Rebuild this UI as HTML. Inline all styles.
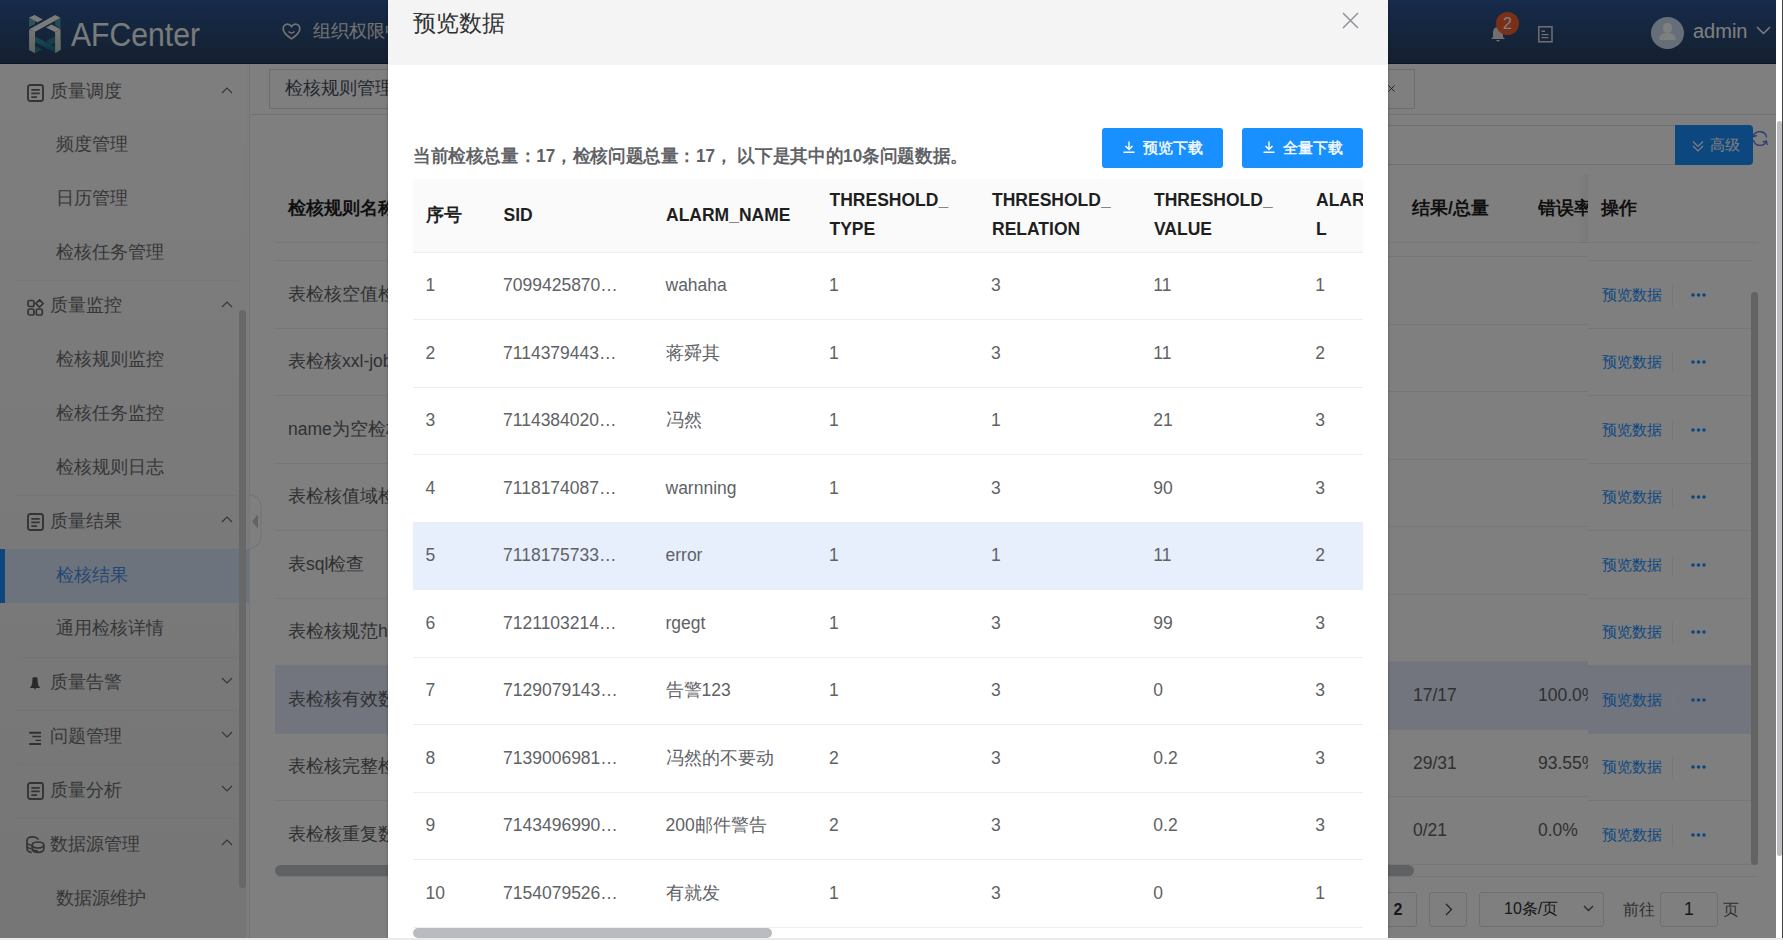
<!DOCTYPE html>
<html><head><meta charset="utf-8">
<style>
*{box-sizing:border-box;margin:0;padding:0}
html,body{width:1783px;height:940px;overflow:hidden;background:#fff;font-family:"Liberation Sans",sans-serif;}
.a{position:absolute;white-space:nowrap}
#page{position:absolute;left:0;top:0;width:1776px;height:938px;background:#fff;overflow:hidden}
#hdr{position:absolute;left:0;top:0;width:1776px;height:64px;background:linear-gradient(#2c5596,#2a4262 92%,#283e5c 98%,#102a58 98.5%)}
#side{position:absolute;left:0;top:64px;width:250px;height:874px;background:linear-gradient(#fdfdfd,#f6f6f6 35%,#ececec);border-right:1px solid #eaeaea}
.st{font-size:17.5px;line-height:20px;color:#6c6e72}
.div{position:absolute;left:17px;width:220px;height:1px;background:rgba(0,0,0,.035)}
.arr{position:absolute;left:221px;width:11px;height:6px}
#mask{position:absolute;left:0;top:0;width:1776px;height:938px;background:rgba(0,0,0,.5)}
#modal{position:absolute;left:388px;top:0;width:1000px;height:938px;background:#fff;overflow:hidden;box-shadow:0 1px 3px rgba(0,0,0,.3)}
#mhdr{position:absolute;left:0;top:0;width:1000px;height:65px;background:#f4f4f4}
.th{font-size:17.5px;font-weight:bold;color:#1f1f1f;line-height:29px}
.td{font-size:17.5px;color:#606266;line-height:20px}
.rowb{position:absolute;left:25px;width:950px;height:1px;background:#ebeef5}
.btn{position:absolute;top:128px;height:40px;width:121px;background:#1890ff;border-radius:3px;color:#fff;font-size:15px}
#vsb{position:absolute;left:1776px;top:0;width:7px;height:940px;background:#fff}
#bstrip{position:absolute;left:0;top:938px;width:1783px;height:2px;background:#ebebeb}
</style></head><body>
<div id="page">
  <div id="hdr">
    <svg class="a" style="left:25px;top:10px" width="40" height="48" viewBox="0 0 40 48">
      <defs><linearGradient id="pl" x1="0" y1="0" x2="0" y2="1"><stop offset="0" stop-color="#ecefe6"/><stop offset="1" stop-color="#b8cac8"/></linearGradient>
      <linearGradient id="tl" x1="0" y1="0" x2="1" y2="1"><stop offset="0" stop-color="#3e96a0"/><stop offset="1" stop-color="#0a6a8a"/></linearGradient></defs>
      <polygon points="4.1,7.4 10,10.3 10,14.3 4.1,17.1" fill="#5ea9aa"/>
      <polygon points="30.1,11 35.5,7.7 35.5,19 30.1,15" fill="#4a98a0"/>
      <polygon points="10,26.6 30.1,36.8 30.1,42.4 10,32.2" fill="url(#tl)"/>
      <polygon points="10,36 17.5,39.6 10,43" fill="#2a7a8a"/>
      <polygon points="21.5,31 30.1,26.2 30.1,32.5 25,35" fill="#2a7c8c"/>
      <polygon points="4.1,7.4 9.7,4.9 17.9,9.5 12.3,12.3" fill="#f2f8f6"/>
      <polygon points="4.3,19.2 30.1,4.9 35.5,7.7 9.7,22" fill="#f2f8f6"/>
      <polygon points="20.9,17.4 26.6,14.6 35.5,19.2 30.1,22" fill="#f2f8f6"/>
      <polygon points="4.1,19.4 10,22 10,43.2 4.1,40.1" fill="url(#pl)"/>
      <polygon points="30.1,22 35.5,19.2 35.8,39.8 30.1,43.2" fill="url(#pl)"/>
    </svg>
    <div class="a" style="left:71px;top:15px;font-size:33.5px;line-height:40px;color:#f0f8f5;transform:scaleX(0.9);transform-origin:0 0">AFCenter</div>
    <svg class="a" style="left:282px;top:23px" width="19" height="17" viewBox="0 0 19 17"><path d="M9.5 15.8 C6 13.5 1.2 10.5 1.2 5.8 C1.2 3 3.2 1.2 5.5 1.2 C7.3 1.2 8.6 2.3 9.5 3.6 C10.4 2.3 11.7 1.2 13.5 1.2 C15.8 1.2 17.8 3 17.8 5.8 C17.8 10.5 13 13.5 9.5 15.8Z" fill="none" stroke="#e6e6e6" stroke-width="1.7"/><path d="M6.5 8.5 Q9.5 11.5 12.5 8.5" fill="none" stroke="#e6e6e6" stroke-width="1.6"/></svg>
    <div class="a" style="left:313px;top:21px;font-size:17.5px;line-height:20px;color:#e6e6e6">组织权限中心</div>
    <!-- bell -->
    <svg class="a" style="left:1490px;top:26px" width="16" height="17" viewBox="0 0 16 17"><path d="M8 1 C4.5 1 3 3.5 3 7 L3 11 L1 13 L15 13 L13 11 L13 7 C13 3.5 11.5 1 8 1Z" fill="#e0e0e0"/><path d="M6 14 Q8 17 10 14Z" fill="#e0e0e0"/></svg>
    <div class="a" style="left:1496px;top:12px;width:23px;height:23px;border-radius:50%;background:#f4602e;color:#fff;font-size:16px;line-height:23px;text-align:center">2</div>
    <svg class="a" style="left:1537.5px;top:26px" width="15" height="17" viewBox="0 0 15 17"><rect x="0.8" y="0.8" width="13.2" height="15" fill="none" stroke="#e0e0e0" stroke-width="1.5"/><path d="M3.5 5.3 H7 M3.5 8.6 H10.5 M3.5 11.6 H10.5" stroke="#e0e0e0" stroke-width="1.4"/></svg>
    <div class="a" style="left:1651px;top:17px;width:33px;height:32px;border-radius:50%;background:#cddff3;overflow:hidden">
      <div class="a" style="left:11.5px;top:6.3px;width:9.5px;height:9.5px;border-radius:50%;background:#fff"></div>
      <div class="a" style="left:7.7px;top:16px;width:17.6px;height:7px;border-radius:8px 8px 0 0;background:#fff"></div>
    </div>
    <div class="a" style="left:1693px;top:19px;font-size:20px;line-height:24px;color:#fff">admin</div>
    <svg class="a" style="left:1756px;top:26px" width="15" height="9" viewBox="0 0 15 9"><path d="M1 1 L7.5 7.5 L14 1" fill="none" stroke="#fff" stroke-width="1.5"/></svg>
  </div>

  <div id="side">
<div class="div" style="top:0px;background:#fff"></div>
<svg class="a" style="left:27px;top:19.5px" width="18" height="19" viewBox="0 0 18 19"><rect x="1" y="1" width="15" height="16" rx="2.2" fill="none" stroke="#66686c" stroke-width="1.9"/><path d="M4.3 5.8 H12.8 M4.3 9.4 H12.8 M4.3 13.1 H10" stroke="#66686c" stroke-width="1.7"/></svg>
<div class="a st" style="left:50px;top:17px">质量调度</div>
<svg class="a" style="left:220.5px;top:22.7px" width="12" height="7" viewBox="0 0 12 7"><path d="M1 6 L6 1 L11 6" fill="none" stroke="#6a6a6a" stroke-width="1.1"/></svg>
<div class="a st" style="left:56px;top:70px">频度管理</div>
<div class="a st" style="left:56px;top:124px">日历管理</div>
<div class="a st" style="left:56px;top:178px">检核任务管理</div>
<div class="div" style="top:216.0px"></div>
<svg class="a" style="left:27px;top:234.5px" width="18" height="18" viewBox="0 0 18 18"><rect x="1" y="1.5" width="6" height="6" rx="1.8" fill="none" stroke="#66686c" stroke-width="1.7"/><rect x="1" y="10" width="6" height="6" rx="1.8" fill="none" stroke="#66686c" stroke-width="1.7"/><rect x="9.3" y="10" width="6" height="6" rx="1.8" fill="none" stroke="#66686c" stroke-width="1.7"/><path d="M12.5 0.8 L16.2 4.5 L12.5 8.2 L8.8 4.5 Z" fill="none" stroke="#66686c" stroke-width="1.7" stroke-linejoin="round"/></svg>
<div class="a st" style="left:50px;top:231px">质量监控</div>
<svg class="a" style="left:220.5px;top:236.7px" width="12" height="7" viewBox="0 0 12 7"><path d="M1 6 L6 1 L11 6" fill="none" stroke="#6a6a6a" stroke-width="1.1"/></svg>
<div class="a st" style="left:56px;top:285px">检核规则监控</div>
<div class="a st" style="left:56px;top:339px">检核任务监控</div>
<div class="a st" style="left:56px;top:393px">检核规则日志</div>
<div class="div" style="top:431.0px"></div>
<svg class="a" style="left:27px;top:449.0px" width="18" height="19" viewBox="0 0 18 19"><rect x="1" y="1" width="15" height="16" rx="2.2" fill="none" stroke="#66686c" stroke-width="1.9"/><path d="M4.3 5.8 H12.8 M4.3 9.4 H12.8 M4.3 13.1 H10" stroke="#66686c" stroke-width="1.7"/></svg>
<div class="a st" style="left:50px;top:446.5px">质量结果</div>
<svg class="a" style="left:220.5px;top:452.2px" width="12" height="7" viewBox="0 0 12 7"><path d="M1 6 L6 1 L11 6" fill="none" stroke="#6a6a6a" stroke-width="1.1"/></svg>
<div class="a" style="left:0;top:485px;width:249px;height:54px;background:#d8e6f9"></div>
<div class="a" style="left:0;top:485px;width:5px;height:54px;background:#1a8cff"></div>
<div class="a st" style="left:56px;top:500.5px;color:#4c8ee8">检核结果</div>
<div class="a st" style="left:56px;top:554px">通用检核详情</div>
<div class="div" style="top:592.5px"></div>
<svg class="a" style="left:29px;top:613.0px" width="12" height="13" viewBox="0 0 12 13"><path d="M3.5 1.2 Q3.5 0.2 4.5 0.2 H7.5 Q8.5 0.2 8.5 1.2 L8.8 6 Q9 8.5 11.3 11 H0.7 Q3 8.5 3.2 6 Z" fill="#505255"/><path d="M5 11 H7 L6 12.8 Z" fill="#505255"/></svg>
<div class="a st" style="left:50px;top:607.5px">质量告警</div>
<svg class="a" style="left:220.5px;top:613.2px" width="12" height="7" viewBox="0 0 12 7"><path d="M1 1 L6 6 L11 1" fill="none" stroke="#6a6a6a" stroke-width="1.1"/></svg>
<div class="div" style="top:646.0px"></div>
<svg class="a" style="left:29px;top:667.0px" width="13" height="14" viewBox="0 0 13 14"><path d="M0.2 1.8 H12 M11.5 1.8 H12" stroke="#606266" stroke-width="2"/><path d="M3.3 5.5 H12 M6.5 9.4 H12" stroke="#606266" stroke-width="1.4"/><path d="M0.2 13 H12" stroke="#606266" stroke-width="2"/></svg>
<div class="a st" style="left:50px;top:661.5px">问题管理</div>
<svg class="a" style="left:220.5px;top:667.2px" width="12" height="7" viewBox="0 0 12 7"><path d="M1 1 L6 6 L11 1" fill="none" stroke="#6a6a6a" stroke-width="1.1"/></svg>
<div class="div" style="top:699.5px"></div>
<svg class="a" style="left:27px;top:718.0px" width="18" height="19" viewBox="0 0 18 19"><rect x="1" y="1" width="15" height="16" rx="2.2" fill="none" stroke="#66686c" stroke-width="1.9"/><path d="M4.3 5.8 H12.8 M4.3 9.4 H12.8 M4.3 13.1 H10" stroke="#66686c" stroke-width="1.7"/></svg>
<div class="a st" style="left:50px;top:715.5px">质量分析</div>
<svg class="a" style="left:220.5px;top:721.2px" width="12" height="7" viewBox="0 0 12 7"><path d="M1 1 L6 6 L11 1" fill="none" stroke="#6a6a6a" stroke-width="1.1"/></svg>
<div class="div" style="top:753.5px"></div>
<svg class="a" style="left:26px;top:772.0px" width="19" height="18" viewBox="0 0 19 18"><path d="M12.5 3.5 Q10.5 0.8 6.5 0.8 Q1 0.8 1 5 V12.5 Q1 15.8 5.8 16.5" fill="none" stroke="#66686c" stroke-width="1.7"/><path d="M1 7.5 Q2.5 9 5.5 9.3 M1 11 Q2.5 12.5 5.5 12.8" fill="none" stroke="#66686c" stroke-width="1.5"/><ellipse cx="12" cy="9" rx="5.8" ry="3" fill="none" stroke="#66686c" stroke-width="1.7"/><path d="M6.2 9 V13 Q6.2 16.3 12 16.3 Q17.8 16.3 17.8 13 V9 M6.2 12.2 Q7 15 12 15" fill="none" stroke="#66686c" stroke-width="1.7"/></svg>
<div class="a st" style="left:50px;top:769.5px">数据源管理</div>
<svg class="a" style="left:220.5px;top:775.2px" width="12" height="7" viewBox="0 0 12 7"><path d="M1 6 L6 1 L11 6" fill="none" stroke="#6a6a6a" stroke-width="1.1"/></svg>
<div class="a st" style="left:56px;top:823.5px">数据源维护</div>
<div class="a" style="left:245.5px;top:0px;width:3.5px;height:874px;background:#f8f8f8"></div>
<div class="a" style="left:245.5px;top:485px;width:3.5px;height:54px;background:#d8e6f9"></div>
<div class="a" style="left:239px;top:246px;width:6.5px;height:578px;background:#d0d0d0;border-radius:4px"></div>
  </div>

  <div id="content">
<div class="a" style="left:269px;top:69px;width:1146px;height:40px;border:1px solid #d8dce5;background:#fff"></div>
<div class="a st" style="left:285px;top:78px;color:#495060">检核规则管理</div>
<svg class="a" style="left:1388px;top:84.5px" width="7" height="7" viewBox="0 0 7 7"><path d="M0.5 0.5 L6.5 6.5 M6.5 0.5 L0.5 6.5" stroke="#303540" stroke-width="0.9"/></svg>
<div class="a" style="left:250px;top:114px;width:1526px;height:1px;background:#e6e6e6"></div>
<svg class="a" style="left:249px;top:494px" width="13" height="55" viewBox="0 0 13 55"><path d="M0 0 Q12 3 12 12 V43 Q12 52 0 55 Z" fill="#fff" stroke="#e4e4e4" stroke-width="1"/><path d="M9 20 L3 27.5 L9 35 Z" fill="#c8c8c8"/></svg>
<div class="a" style="left:400px;top:125px;width:1280px;height:40px;border:1px solid #dcdfe6;border-radius:3px;background:#fff"></div>
<svg class="a" style="left:1750px;top:129px" width="20" height="20" viewBox="0 0 20 20"><path d="M3.6 7.3 A6.7 6.7 0 0 1 16.6 8.5" fill="none" stroke="#5078e8" stroke-width="1.3"/><path d="M16.3 12 A6.7 6.7 0 0 1 3.4 10.8" fill="none" stroke="#5078e8" stroke-width="1.3"/><path d="M2.5 3.5 L3.3 7.6 L7 6.6" fill="none" stroke="#5078e8" stroke-width="1.3"/><path d="M17.2 16 L16.5 12 L12.8 13" fill="none" stroke="#5078e8" stroke-width="1.3"/></svg>
<div class="a" style="left:1675px;top:125px;width:78px;height:40px;background:#1890ff;border-radius:0 4px 4px 0"></div>
<svg class="a" style="left:1691.5px;top:139.5px" width="12" height="12" viewBox="0 0 12 12"><path d="M1 1.5 L6 6.5 L11 1.5 M1 6 L6 11 L11 6" fill="none" stroke="#fff" stroke-width="1.2"/></svg>
<div class="a" style="left:1710px;top:136px;font-size:15px;line-height:18px;color:#fff">高级</div>
<div class="a" style="left:275px;top:175px;width:1483px;height:68px;background:#fff"></div>
<div class="a" style="left:275px;top:242px;width:1476px;height:1px;background:#ebeef5"></div>
<div class="a th" style="left:288px;top:194px">检核规则名称</div>
<div class="a th" style="left:1412px;top:194px">结果/总量</div>
<div class="a th" style="left:1538px;top:194px;width:50px;overflow:hidden">错误率</div>
<div class="a" style="left:275px;top:256px;width:1313px;height:1px;background:#ebeef5"></div>
<div class="a" style="left:275px;top:323.5px;width:1313px;height:1px;background:#ebeef5"></div>
<div class="a" style="left:275px;top:391.0px;width:1313px;height:1px;background:#ebeef5"></div>
<div class="a" style="left:275px;top:458.5px;width:1313px;height:1px;background:#ebeef5"></div>
<div class="a" style="left:275px;top:526.0px;width:1313px;height:1px;background:#ebeef5"></div>
<div class="a" style="left:275px;top:593.5px;width:1313px;height:1px;background:#ebeef5"></div>
<div class="a" style="left:275px;top:661.0px;width:1313px;height:1px;background:#ebeef5"></div>
<div class="a" style="left:275px;top:661.5px;width:1313px;height:67.5px;background:#e4ebfb"></div>
<div class="a" style="left:275px;top:728.5px;width:1313px;height:1px;background:#ebeef5"></div>
<div class="a" style="left:275px;top:796.0px;width:1313px;height:1px;background:#ebeef5"></div>
<div class="a" style="left:275px;top:863.5px;width:1313px;height:1px;background:#ebeef5"></div>
<div class="a td" style="left:1413px;top:685.25px">17/17</div>
<div class="a td" style="left:1538px;top:685.25px;width:50px;overflow:hidden">100.0%</div>
<div class="a td" style="left:1413px;top:752.75px">29/31</div>
<div class="a td" style="left:1538px;top:752.75px;width:50px;overflow:hidden">93.55%</div>
<div class="a td" style="left:1413px;top:820.25px">0/21</div>
<div class="a td" style="left:1538px;top:820.25px;width:50px;overflow:hidden">0.0%</div>
<div class="a" style="left:275px;top:243px;width:113px;height:18px;background:#fff;border-bottom:1px solid #ebeef5"></div>
<div class="a" style="left:275px;top:261.0px;width:113px;height:67.5px;background:#fff;border-bottom:1px solid #ebeef5"></div>
<div class="a td" style="left:288px;top:283.75px">表检核空值检查</div>
<div class="a" style="left:275px;top:328.5px;width:113px;height:67.5px;background:#fff;border-bottom:1px solid #ebeef5"></div>
<div class="a td" style="left:288px;top:351.25px">表检核xxl-job</div>
<div class="a" style="left:275px;top:396.0px;width:113px;height:67.5px;background:#fff;border-bottom:1px solid #ebeef5"></div>
<div class="a td" style="left:288px;top:418.75px">name为空检核</div>
<div class="a" style="left:275px;top:463.5px;width:113px;height:67.5px;background:#fff;border-bottom:1px solid #ebeef5"></div>
<div class="a td" style="left:288px;top:486.25px">表检核值域检查</div>
<div class="a" style="left:275px;top:531.0px;width:113px;height:67.5px;background:#fff;border-bottom:1px solid #ebeef5"></div>
<div class="a td" style="left:288px;top:553.75px">表sql检查</div>
<div class="a" style="left:275px;top:598.5px;width:113px;height:67.5px;background:#fff;border-bottom:1px solid #ebeef5"></div>
<div class="a td" style="left:288px;top:621.25px">表检核规范hive</div>
<div class="a" style="left:275px;top:666.0px;width:113px;height:67.5px;background:#e4ebfb;border-bottom:1px solid #ebeef5"></div>
<div class="a td" style="left:288px;top:688.75px">表检核有效数据</div>
<div class="a" style="left:275px;top:733.5px;width:113px;height:67.5px;background:#fff;border-bottom:1px solid #ebeef5"></div>
<div class="a td" style="left:288px;top:756.25px">表检核完整检查</div>
<div class="a" style="left:275px;top:801.0px;width:113px;height:67.5px;background:#fff;border-bottom:1px solid #ebeef5"></div>
<div class="a td" style="left:288px;top:823.75px">表检核重复数据</div>
<div class="a" style="left:1576px;top:175px;width:12px;height:68px;background:linear-gradient(90deg,rgba(0,0,0,0),rgba(0,0,0,.05))"></div>
<div class="a" style="left:1588px;top:175px;width:163px;height:68px;background:#fff;border-bottom:1px solid #ebeef5"></div>
<div class="a th" style="left:1601px;top:194px">操作</div>
<div class="a" style="left:1588px;top:243px;width:163px;height:18px;background:#fff;border-bottom:1px solid #ebeef5"></div>
<div class="a" style="left:1588px;top:261.0px;width:163px;height:67.5px;background:#fff;border-bottom:1px solid #ebeef5"></div>
<div class="a" style="left:1602px;top:285.75px;font-size:15px;line-height:18px;color:#1890ff">预览数据</div>
<div class="a" style="left:1672px;top:284.75px;width:1px;height:21px;background:#ebeef5"></div>
<svg class="a" style="left:1691px;top:292.75px" width="15" height="4" viewBox="0 0 15 4"><circle cx="2" cy="2" r="1.8" fill="#1890ff"/><circle cx="7.5" cy="2" r="1.8" fill="#1890ff"/><circle cx="13" cy="2" r="1.8" fill="#1890ff"/></svg>
<div class="a" style="left:1588px;top:328.5px;width:163px;height:67.5px;background:#fff;border-bottom:1px solid #ebeef5"></div>
<div class="a" style="left:1602px;top:353.25px;font-size:15px;line-height:18px;color:#1890ff">预览数据</div>
<div class="a" style="left:1672px;top:352.25px;width:1px;height:21px;background:#ebeef5"></div>
<svg class="a" style="left:1691px;top:360.25px" width="15" height="4" viewBox="0 0 15 4"><circle cx="2" cy="2" r="1.8" fill="#1890ff"/><circle cx="7.5" cy="2" r="1.8" fill="#1890ff"/><circle cx="13" cy="2" r="1.8" fill="#1890ff"/></svg>
<div class="a" style="left:1588px;top:396.0px;width:163px;height:67.5px;background:#fff;border-bottom:1px solid #ebeef5"></div>
<div class="a" style="left:1602px;top:420.75px;font-size:15px;line-height:18px;color:#1890ff">预览数据</div>
<div class="a" style="left:1672px;top:419.75px;width:1px;height:21px;background:#ebeef5"></div>
<svg class="a" style="left:1691px;top:427.75px" width="15" height="4" viewBox="0 0 15 4"><circle cx="2" cy="2" r="1.8" fill="#1890ff"/><circle cx="7.5" cy="2" r="1.8" fill="#1890ff"/><circle cx="13" cy="2" r="1.8" fill="#1890ff"/></svg>
<div class="a" style="left:1588px;top:463.5px;width:163px;height:67.5px;background:#fff;border-bottom:1px solid #ebeef5"></div>
<div class="a" style="left:1602px;top:488.25px;font-size:15px;line-height:18px;color:#1890ff">预览数据</div>
<div class="a" style="left:1672px;top:487.25px;width:1px;height:21px;background:#ebeef5"></div>
<svg class="a" style="left:1691px;top:495.25px" width="15" height="4" viewBox="0 0 15 4"><circle cx="2" cy="2" r="1.8" fill="#1890ff"/><circle cx="7.5" cy="2" r="1.8" fill="#1890ff"/><circle cx="13" cy="2" r="1.8" fill="#1890ff"/></svg>
<div class="a" style="left:1588px;top:531.0px;width:163px;height:67.5px;background:#fff;border-bottom:1px solid #ebeef5"></div>
<div class="a" style="left:1602px;top:555.75px;font-size:15px;line-height:18px;color:#1890ff">预览数据</div>
<div class="a" style="left:1672px;top:554.75px;width:1px;height:21px;background:#ebeef5"></div>
<svg class="a" style="left:1691px;top:562.75px" width="15" height="4" viewBox="0 0 15 4"><circle cx="2" cy="2" r="1.8" fill="#1890ff"/><circle cx="7.5" cy="2" r="1.8" fill="#1890ff"/><circle cx="13" cy="2" r="1.8" fill="#1890ff"/></svg>
<div class="a" style="left:1588px;top:598.5px;width:163px;height:67.5px;background:#fff;border-bottom:1px solid #ebeef5"></div>
<div class="a" style="left:1602px;top:623.25px;font-size:15px;line-height:18px;color:#1890ff">预览数据</div>
<div class="a" style="left:1672px;top:622.25px;width:1px;height:21px;background:#ebeef5"></div>
<svg class="a" style="left:1691px;top:630.25px" width="15" height="4" viewBox="0 0 15 4"><circle cx="2" cy="2" r="1.8" fill="#1890ff"/><circle cx="7.5" cy="2" r="1.8" fill="#1890ff"/><circle cx="13" cy="2" r="1.8" fill="#1890ff"/></svg>
<div class="a" style="left:1588px;top:666.0px;width:163px;height:67.5px;background:#e4ebfb;border-bottom:1px solid #ebeef5"></div>
<div class="a" style="left:1602px;top:690.75px;font-size:15px;line-height:18px;color:#1890ff">预览数据</div>
<div class="a" style="left:1672px;top:689.75px;width:1px;height:21px;background:#ebeef5"></div>
<svg class="a" style="left:1691px;top:697.75px" width="15" height="4" viewBox="0 0 15 4"><circle cx="2" cy="2" r="1.8" fill="#1890ff"/><circle cx="7.5" cy="2" r="1.8" fill="#1890ff"/><circle cx="13" cy="2" r="1.8" fill="#1890ff"/></svg>
<div class="a" style="left:1588px;top:733.5px;width:163px;height:67.5px;background:#fff;border-bottom:1px solid #ebeef5"></div>
<div class="a" style="left:1602px;top:758.25px;font-size:15px;line-height:18px;color:#1890ff">预览数据</div>
<div class="a" style="left:1672px;top:757.25px;width:1px;height:21px;background:#ebeef5"></div>
<svg class="a" style="left:1691px;top:765.25px" width="15" height="4" viewBox="0 0 15 4"><circle cx="2" cy="2" r="1.8" fill="#1890ff"/><circle cx="7.5" cy="2" r="1.8" fill="#1890ff"/><circle cx="13" cy="2" r="1.8" fill="#1890ff"/></svg>
<div class="a" style="left:1588px;top:801.0px;width:163px;height:64.0px;background:#fff;border-bottom:1px solid #ebeef5"></div>
<div class="a" style="left:1602px;top:825.75px;font-size:15px;line-height:18px;color:#1890ff">预览数据</div>
<div class="a" style="left:1672px;top:824.75px;width:1px;height:21px;background:#ebeef5"></div>
<svg class="a" style="left:1691px;top:832.75px" width="15" height="4" viewBox="0 0 15 4"><circle cx="2" cy="2" r="1.8" fill="#1890ff"/><circle cx="7.5" cy="2" r="1.8" fill="#1890ff"/><circle cx="13" cy="2" r="1.8" fill="#1890ff"/></svg>
<div class="a" style="left:1751px;top:242px;width:7px;height:1px;background:#ebeef5"></div>
<div class="a" style="left:1751px;top:292px;width:7px;height:573px;background:#c6c6c8;border-radius:4px"></div>
<div class="a" style="left:275px;top:865px;width:1139px;height:11px;background:#c0c2c6;border-radius:6px"></div>
<div class="a" style="left:275px;top:876px;width:1483px;height:1px;background:#ebeef5"></div>
<div class="a" style="left:1380px;top:892px;width:37px;height:35px;border:1px solid #dcdfe6;border-radius:3px;background:#fff"></div>
<div class="a" style="left:1393.5px;top:900px;font-size:16px;line-height:20px;font-weight:bold;color:#303133">2</div>
<div class="a" style="left:1429px;top:892px;width:38px;height:35px;border:1px solid #dcdfe6;border-radius:3px;background:#fff"></div>
<svg class="a" style="left:1444.5px;top:903px" width="8" height="13" viewBox="0 0 8 13"><path d="M1 1 L6.5 6.5 L1 12" fill="none" stroke="#404246" stroke-width="1.2"/></svg>
<div class="a" style="left:1479px;top:892px;width:125px;height:35px;border:1px solid #dcdfe6;border-radius:3px;background:#fff"></div>
<div class="a" style="left:1504px;top:899px;font-size:16px;line-height:20px;color:#303133">10条/页</div>
<svg class="a" style="left:1583px;top:905px" width="11" height="7" viewBox="0 0 11 7"><path d="M1 1 L5.5 5.5 L10 1" fill="none" stroke="#505050" stroke-width="1.3"/></svg>
<div class="a" style="left:1623px;top:900px;font-size:16px;line-height:20px;color:#606266">前往</div>
<div class="a" style="left:1660px;top:892px;width:58px;height:35px;border:1px solid #dcdfe6;border-radius:3px;background:#fff"></div>
<div class="a" style="left:1684px;top:899px;font-size:17.5px;line-height:20px;color:#303133">1</div>
<div class="a" style="left:1723px;top:900px;font-size:16px;line-height:20px;color:#606266">页</div>
  </div>
</div>
<div id="mask"></div>
<div id="modal">
  <div id="mhdr">
    <div class="a" style="left:25px;top:11px;font-size:22.5px;line-height:26px;color:#303133">预览数据</div>
    <svg class="a" style="left:954px;top:12px" width="17" height="17" viewBox="0 0 17 17"><path d="M1 1 L16 16 M16 1 L1 16" stroke="#909399" stroke-width="1.5"/></svg>
  </div>
  <div id="mbody">
<div class="a" style="left:25px;top:146px;font-size:17.5px;line-height:20px;font-weight:bold;color:#606266;transform:scaleX(0.978);transform-origin:0 0">当前检核总量：17，检核问题总量：17， 以下是其中的10条问题数据。</div>
<div class="btn" style="left:714px"></div>
<svg class="a" style="left:735px;top:141px" width="12" height="12" viewBox="0 0 12 12"><path d="M6 0.5 V8.5 M2.5 5 L6 8.5 L9.5 5 M0.5 11.2 H11.5" fill="none" stroke="#fff" stroke-width="1.4"/></svg>
<div class="a" style="left:755px;top:139px;font-size:15px;line-height:18px;color:#fff;-webkit-text-stroke:0.35px #fff">预览下载</div>
<div class="btn" style="left:854px"></div>
<svg class="a" style="left:875px;top:141px" width="12" height="12" viewBox="0 0 12 12"><path d="M6 0.5 V8.5 M2.5 5 L6 8.5 L9.5 5 M0.5 11.2 H11.5" fill="none" stroke="#fff" stroke-width="1.4"/></svg>
<div class="a" style="left:895px;top:139px;font-size:15px;line-height:18px;color:#fff;-webkit-text-stroke:0.35px #fff">全量下载</div>
<div class="a" style="left:25px;top:179px;width:950px;height:73.5px;background:#fafafa;border-bottom:1px solid #ebeef5"></div>
<div class="a th" style="left:38px;top:201px">序号</div>
<div class="a th" style="left:115.5px;top:201px">SID</div>
<div class="a th" style="left:278px;top:201px">ALARM_NAME</div>
<div class="a th" style="left:441.5px;top:186px">THRESHOLD_<br>TYPE</div>
<div class="a th" style="left:604px;top:186px">THRESHOLD_<br>RELATION</div>
<div class="a th" style="left:766px;top:186px">THRESHOLD_<br>VALUE</div>
<div class="a th" style="left:928px;top:186px;width:47px;overflow:hidden">ALARM_<br>L</div>
<div class="rowb" style="top:319.2px"></div>
<div class="a td" style="left:37.5px;top:275.25px">1</div>
<div class="a td" style="left:115px;top:275.25px">7099425870…</div>
<div class="a td" style="left:277.5px;top:275.25px">wahaha</div>
<div class="a td" style="left:441px;top:275.25px">1</div>
<div class="a td" style="left:603px;top:275.25px">3</div>
<div class="a td" style="left:765.3px;top:275.25px">11</div>
<div class="a td" style="left:927.3px;top:275.25px">1</div>
<div class="rowb" style="top:386.7px"></div>
<div class="a td" style="left:37.5px;top:342.75px">2</div>
<div class="a td" style="left:115px;top:342.75px">7114379443…</div>
<div class="a td" style="left:277.5px;top:342.75px">蒋舜其</div>
<div class="a td" style="left:441px;top:342.75px">1</div>
<div class="a td" style="left:603px;top:342.75px">3</div>
<div class="a td" style="left:765.3px;top:342.75px">11</div>
<div class="a td" style="left:927.3px;top:342.75px">2</div>
<div class="rowb" style="top:454.2px"></div>
<div class="a td" style="left:37.5px;top:410.25px">3</div>
<div class="a td" style="left:115px;top:410.25px">7114384020…</div>
<div class="a td" style="left:277.5px;top:410.25px">冯然</div>
<div class="a td" style="left:441px;top:410.25px">1</div>
<div class="a td" style="left:603px;top:410.25px">1</div>
<div class="a td" style="left:765.3px;top:410.25px">21</div>
<div class="a td" style="left:927.3px;top:410.25px">3</div>
<div class="rowb" style="top:521.7px"></div>
<div class="a td" style="left:37.5px;top:477.75px">4</div>
<div class="a td" style="left:115px;top:477.75px">7118174087…</div>
<div class="a td" style="left:277.5px;top:477.75px">warnning</div>
<div class="a td" style="left:441px;top:477.75px">1</div>
<div class="a td" style="left:603px;top:477.75px">3</div>
<div class="a td" style="left:765.3px;top:477.75px">90</div>
<div class="a td" style="left:927.3px;top:477.75px">3</div>
<div class="rowb" style="top:589.2px"></div>
<div class="a" style="left:25px;top:522px;width:950px;height:67px;background:#e7eefc"></div>
<div class="a td" style="left:37.5px;top:545.25px">5</div>
<div class="a td" style="left:115px;top:545.25px">7118175733…</div>
<div class="a td" style="left:277.5px;top:545.25px">error</div>
<div class="a td" style="left:441px;top:545.25px">1</div>
<div class="a td" style="left:603px;top:545.25px">1</div>
<div class="a td" style="left:765.3px;top:545.25px">11</div>
<div class="a td" style="left:927.3px;top:545.25px">2</div>
<div class="rowb" style="top:656.7px"></div>
<div class="a td" style="left:37.5px;top:612.75px">6</div>
<div class="a td" style="left:115px;top:612.75px">7121103214…</div>
<div class="a td" style="left:277.5px;top:612.75px">rgegt</div>
<div class="a td" style="left:441px;top:612.75px">1</div>
<div class="a td" style="left:603px;top:612.75px">3</div>
<div class="a td" style="left:765.3px;top:612.75px">99</div>
<div class="a td" style="left:927.3px;top:612.75px">3</div>
<div class="rowb" style="top:724.2px"></div>
<div class="a td" style="left:37.5px;top:680.25px">7</div>
<div class="a td" style="left:115px;top:680.25px">7129079143…</div>
<div class="a td" style="left:277.5px;top:680.25px">告警123</div>
<div class="a td" style="left:441px;top:680.25px">1</div>
<div class="a td" style="left:603px;top:680.25px">3</div>
<div class="a td" style="left:765.3px;top:680.25px">0</div>
<div class="a td" style="left:927.3px;top:680.25px">3</div>
<div class="rowb" style="top:791.7px"></div>
<div class="a td" style="left:37.5px;top:747.75px">8</div>
<div class="a td" style="left:115px;top:747.75px">7139006981…</div>
<div class="a td" style="left:277.5px;top:747.75px">冯然的不要动</div>
<div class="a td" style="left:441px;top:747.75px">2</div>
<div class="a td" style="left:603px;top:747.75px">3</div>
<div class="a td" style="left:765.3px;top:747.75px">0.2</div>
<div class="a td" style="left:927.3px;top:747.75px">3</div>
<div class="rowb" style="top:859.2px"></div>
<div class="a td" style="left:37.5px;top:815.25px">9</div>
<div class="a td" style="left:115px;top:815.25px">7143496990…</div>
<div class="a td" style="left:277.5px;top:815.25px">200邮件警告</div>
<div class="a td" style="left:441px;top:815.25px">2</div>
<div class="a td" style="left:603px;top:815.25px">3</div>
<div class="a td" style="left:765.3px;top:815.25px">0.2</div>
<div class="a td" style="left:927.3px;top:815.25px">3</div>
<div class="rowb" style="top:926.7px"></div>
<div class="a td" style="left:37.5px;top:882.75px">10</div>
<div class="a td" style="left:115px;top:882.75px">7154079526…</div>
<div class="a td" style="left:277.5px;top:882.75px">有就发</div>
<div class="a td" style="left:441px;top:882.75px">1</div>
<div class="a td" style="left:603px;top:882.75px">3</div>
<div class="a td" style="left:765.3px;top:882.75px">0</div>
<div class="a td" style="left:927.3px;top:882.75px">1</div>
<div class="a" style="left:25px;top:928px;width:359px;height:10px;background:#b9bbc0;border-radius:5px"></div>
  </div>
</div>
<div id="vsb"><div class="a" style="left:0.5px;top:121px;width:5.5px;height:735px;background:#bdbec3;border-radius:3px"></div><div class="a" style="left:6px;top:0;width:1px;height:940px;background:#404040"></div></div>
<div id="bstrip"></div>
</body></html>
